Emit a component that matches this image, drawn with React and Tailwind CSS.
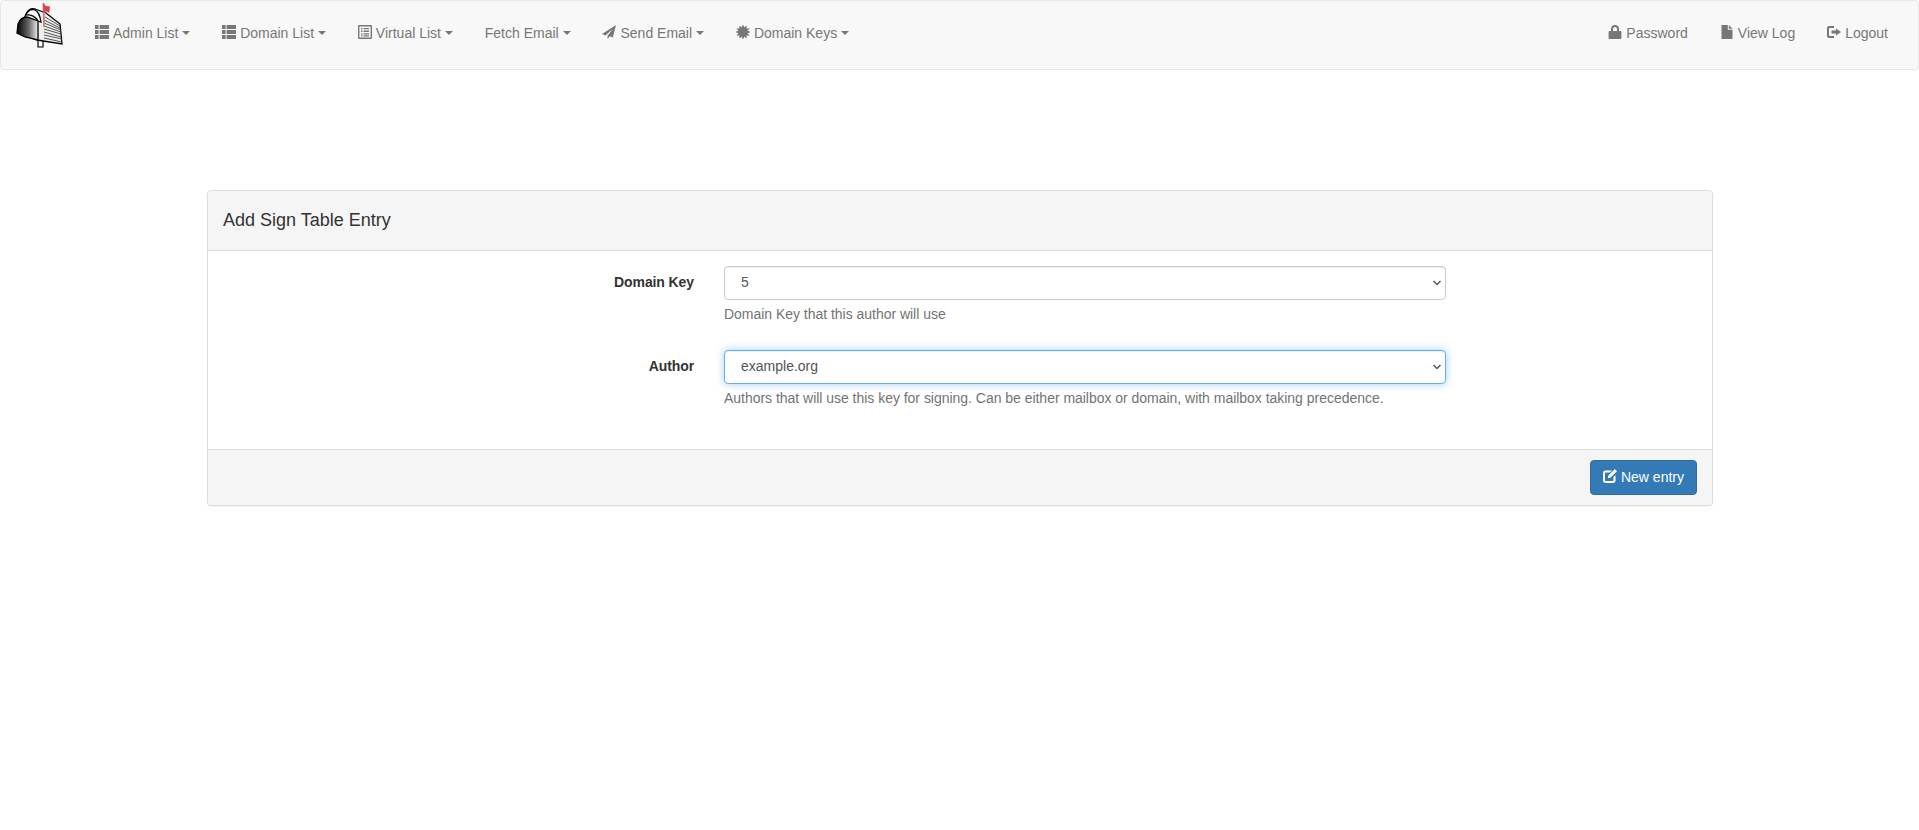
const iconClass = 'w-[14px] h-[14px] shrink-0 -translate-y-[1px]';

const ThList = () => (
  <svg className={iconClass} viewBox="0 0 14 14" fill="currentColor">
    <path d="M0 0h3.600v3.900H0zM4.600 0H14v3.900H4.600zM0 5h3.600v3.900H0zM4.600 5H14v3.900H4.600zM0 10h3.600V14H0zM4.600 10H14V14H4.600z" />
  </svg>
);

const ListAlt = () => (
  <svg className={iconClass} viewBox="0 0 14 14" fill="currentColor">
    <path fillRule="evenodd" d="M1 0h12a1 1 0 011 1v12a1 1 0 01-1 1H1a1 1 0 01-1-1V1a1 1 0 011-1zm.4 1.400v11.200h11.200V1.400zM3 3h1.500v1.300H3zm2.500 0H11v1.300H5.500zM3 5.600h1.500v1.300H3zm2.500 0H11v1.300H5.500zM3 8.200h1.500v1.300H3zm2.500 0H11v1.300H5.500zM3 10.300h1.500v1.200H3zm2.500 0H11v1.200H5.500z" />
  </svg>
);

const Send = () => (
  <svg className={iconClass} viewBox="0 0 14 14" fill="currentColor">
    <path d="M14 0L0 9l3.500 1.500L11 3.500 5.500 11v3l2.300-2.700 3 1.200z" />
  </svg>
);

// starburst, 12 teeth
const burst = Array.from({ length: 24 }, (_, i) => {
  const r = i % 2 === 0 ? 7.4 : 4.9;
  const a = (i * Math.PI) / 12;
  return `${(7 + r * Math.sin(a)).toFixed(2)},${(7 - r * Math.cos(a)).toFixed(2)}`;
}).join(' ');

const Certificate = () => (
  <svg className={iconClass} viewBox="0 0 14 14" fill="currentColor">
    <polygon points={burst} />
  </svg>
);

const Lock = () => (
  <svg className={iconClass} viewBox="0 0 14 14" fill="currentColor">
    <path fillRule="evenodd" d="M3 6V4C3 1.500 4.800 0 7 0s4 1.500 4 4v2h1.300c.6 0 1.100.5 1.100 1.100v5.800c0 .6-.5 1.100-1.100 1.100H1.700c-.6 0-1.100-.5-1.100-1.100V7.100C.6 6.500 1.100 6 1.700 6zm2 0h4V4.200C9 3 8.100 2.100 7 2.100S5 3 5 4.200z" />
  </svg>
);

const FileIcon = () => (
  <svg className={iconClass} viewBox="0 0 14 14" fill="currentColor">
    <path d="M1.500 0h6.300v4.800h4.700V14h-11zM8.800 0l3.700 3.800H8.800z" />
  </svg>
);

const LogOut = () => (
  <svg className={iconClass} viewBox="0 0 14 14" fill="currentColor">
    <path d="M2 1h5v2H3c-.6 0-1 .4-1 1v6c0 .6.400 1 1 1h4v2H2c-1.100 0-2-.9-2-2V3c0-1.100.9-2 2-2zM9 3.500L14 7 9 10.500V8.400H4.500V5.600H9z" />
  </svg>
);

const Edit = () => (
  <svg className={iconClass} viewBox="0 0 14 14" fill="currentColor">
    <path d="M2.500 1.500H9L7 3.500H3c-.6 0-1 .4-1 1V11c0 .6.400 1 1 1h6.500c.6 0 1-.4 1-1V8l2-2v5.500c0 1.400-1.100 2.500-2.500 2.500H2.500C1.100 14 0 12.900 0 11.500V4c0-1.400 1.100-2.500 2.500-2.500z" />
    <path d="M11.800 0L14 2.200 7.600 8.600l-2.800.6.600-2.800z" />
  </svg>
);

const Caret = () => (
  <span className="inline-block w-0 h-0 border-x-4 border-t-4 border-x-transparent border-t-[#777] align-middle" />
);

const Chevron = () => (
  <svg className="absolute right-[5px] top-[14px] w-[8px] h-[6px] pointer-events-none" viewBox="0 0 8 6" fill="none" stroke="#555" strokeWidth="1.500">
    <path d="M.5 1l3.500 3.500L7.500 1" />
  </svg>
);

// drawn in the coordinates of the picture, the box sits at x 14-64
const Mailbox = () => (
  <svg className="w-[50px] h-[50px]" viewBox="14 1 50 50">
    <defs>
      <linearGradient id="door" x1="0" x2="1" y1="0" y2="0">
        <stop offset="0" stopColor="#000" />
        <stop offset="0.55" stopColor="#666" />
        <stop offset="1" stopColor="#eee" />
      </linearGradient>
    </defs>
    <path d="M38 39h5v8h-5z" fill="#fff" stroke="#000" strokeWidth="1.200" />
    <path d="M26 14C28 10 31 8 35 9L46 13 60 24 62 44 37 40 18 33z" fill="#eee" stroke="#000" strokeWidth="1.300" />
    <path d="M26 15C28 10 31 9 35 10 39 12 40 16 41 22L38 21C36 17 31 14 26 15z" fill="#fff" stroke="#000" strokeWidth="1.200" />
    <g stroke="#444" strokeWidth=".9">
      <path d="M45 17l15 9M44 20l16 8M44 23l17 7M44 26l17 6M44 29l17 5M44 32l17 5M44 35l18 4M44 38l18 4" />
    </g>
    <path d="M18 24C20 19 23 17 27 17L38 21 38 40 25 37 17 33z" fill="url(#door)" stroke="#000" strokeWidth="1.300" />
    <path d="M42.600 3h1.800l.6 24h-1.800z" fill="#c98080" />
    <path d="M43 3l3 3 4 .5-.7 6.500-3-1.500-3 .5z" fill="#d9434f" />
  </svg>
);

const navLeft = [
  { label: 'Admin List', icon: <ThList /> },
  { label: 'Domain List', icon: <ThList /> },
  { label: 'Virtual List', icon: <ListAlt /> },
  { label: 'Fetch Email' },
  { label: 'Send Email', icon: <Send /> },
  { label: 'Domain Keys', icon: <Certificate /> },
];

const navRight = [
  { label: 'Password', icon: <Lock /> },
  { label: 'View Log', icon: <FileIcon /> },
  { label: 'Logout', icon: <LogOut /> },
];

const NavItem = ({ label, icon, caret }) => (
  <a className="flex items-center gap-[4px] px-[15px] text-[#777] whitespace-nowrap">
    {icon}
    <span>{label}</span>
    {caret && <Caret />}
  </a>
);

const App = () => {
  return (
    <div className="min-h-[830px] bg-white text-[14px] leading-[20px] text-[#333] font-['Liberation_Sans',Arial,sans-serif]">
      <nav className="h-[70px] pb-[5px] flex items-center justify-between bg-[#f8f8f8] border border-[#e7e7e7] rounded-[4px]">
        <div className="flex items-center gap-[1.8px]">
          <div className="ml-[13px] mr-[14.2px] mb-[13px]">
            <Mailbox />
          </div>
          {navLeft.map((item) => (
            <NavItem key={item.label} {...item} caret />
          ))}
        </div>
        <div className="flex items-center gap-[2px] mr-[15px]">
          {navRight.map((item) => (
            <NavItem key={item.label} {...item} />
          ))}
        </div>
      </nav>

      <div className="ml-[207px] mt-[120px] w-[1506px] bg-white border border-[#ddd] rounded-[4px] shadow-[0_1px_1px_rgba(0,0,0,0.05)]">
        <div className="h-[60px] pb-[2px] flex items-center px-[15px] bg-[#f5f5f5] border-b border-[#ddd] rounded-t-[3px]">
          <h3 className="text-[18px] leading-[20px] text-[#333]">Add Sign Table Entry</h3>
        </div>

        <div className="pt-[15px] pb-[15px]">
          <div className="flex gap-[30px] mb-[15px]">
            <label className="w-[486px] pt-[6px] text-right font-bold tracking-[-0.1px]">Domain Key</label>
            <div className="w-[722px]">
              <div className="relative">
                <select
                  defaultValue="5"
                  className="block w-full h-[34px] pl-[16px] pr-[12px] pb-[2px] appearance-none bg-white text-[#555] border border-[#ccc] rounded-[4px] shadow-[inset_0_1px_1px_rgba(0,0,0,0.075)]"
                >
                  <option value="5">5</option>
                </select>
                <Chevron />
              </div>
              <p className="mt-[4px] mb-[11px] text-[#737373] tracking-[-0.025px]">Domain Key that this author will use</p>
            </div>
          </div>

          <div className="flex gap-[30px] mb-[15px]">
            <label className="w-[486px] pt-[6px] text-right font-bold tracking-[-0.1px]">Author</label>
            <div className="w-[722px]">
              <div className="relative">
                <select
                  defaultValue="example.org"
                  className="block w-full h-[34px] pl-[16px] pr-[12px] pb-[2px] appearance-none bg-white text-[#555] border border-[#66afe9] rounded-[4px] shadow-[inset_0_1px_1px_rgba(0,0,0,0.075),0_0_8px_rgba(102,175,233,0.6)]"
                >
                  <option value="example.org">example.org</option>
                </select>
                <Chevron />
              </div>
              <p className="mt-[4px] mb-[11px] text-[#737373] tracking-[-0.025px]">
                Authors that will use this key for signing. Can be either mailbox or domain, with mailbox taking precedence.
              </p>
            </div>
          </div>
        </div>

        <div className="flex justify-end py-[10px] px-[15px] bg-[#f5f5f5] border-t border-[#ddd] rounded-b-[3px]">
          <button className="h-[35px] pb-[2px] flex items-center gap-[4px] px-[12px] text-white bg-[#337ab7] border border-[#2e6da4] rounded-[4px]">
            <Edit />
            New entry
          </button>
        </div>
      </div>
    </div>
  );
};

export default App;
